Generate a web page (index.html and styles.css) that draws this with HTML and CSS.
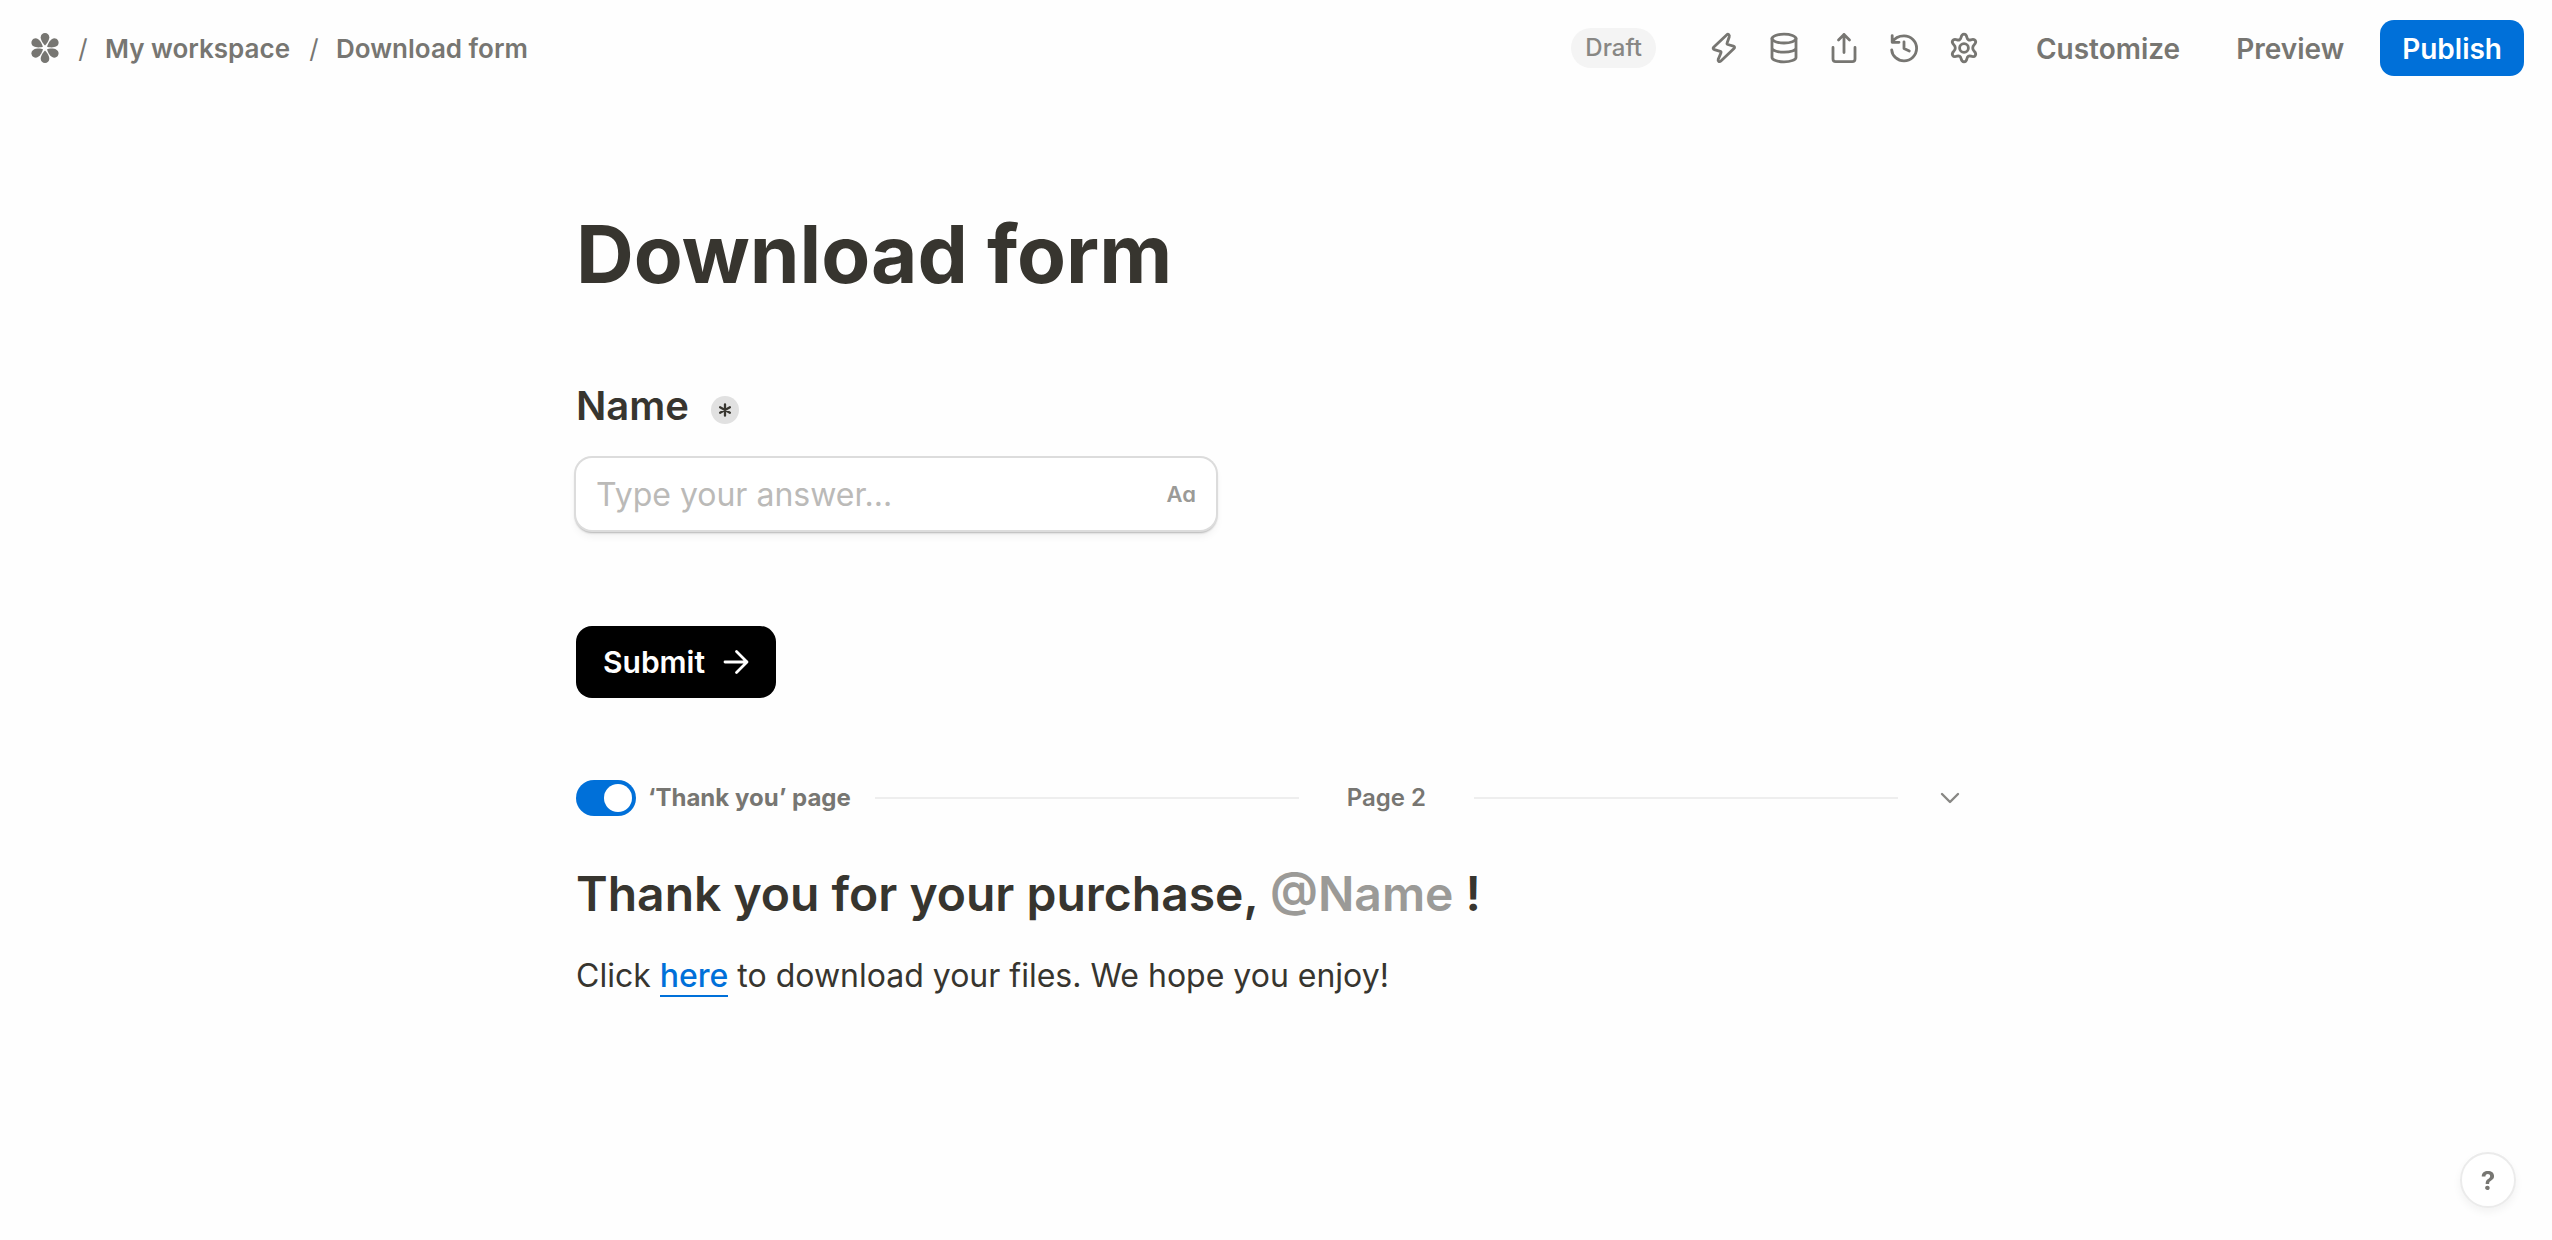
FILE: index.html
```html
<!DOCTYPE html>
<html lang="en">
<head>
    <meta charset="UTF-8">
    <meta name="viewport" content="width=device-width, initial-scale=1.0">
    <title>Download form</title>
    <link rel="stylesheet" href="styles.css">
</head>
<body>
    <!-- Top bar -->
    <header class="topbar">
        <nav class="breadcrumbs">
            <a href="#" class="logo" aria-label="Home">
                <svg width="28" height="32" viewBox="0 0 28 32" fill="currentColor">
                    <path id="petal" d="M14 13.6 C12.8 12.6 9.7 8.6 9.7 5.3 C9.7 2.8 11.6 1 14 1 C16.4 1 18.3 2.8 18.3 5.3 C18.3 8.6 15.2 12.6 14 13.6 Z"/>
                    <use href="#petal" transform="rotate(60 14 16)"/>
                    <use href="#petal" transform="rotate(120 14 16)"/>
                    <use href="#petal" transform="rotate(180 14 16)"/>
                    <use href="#petal" transform="rotate(240 14 16)"/>
                    <use href="#petal" transform="rotate(300 14 16)"/>
                </svg>
            </a>
            <span class="slash">/</span>
            <a href="#">My workspace</a>
            <span class="slash">/</span>
            <a href="#">Download form</a>
        </nav>

        <div class="actions">
            <span class="badge">Draft</span>
            <div class="icons">
                <button class="icon-button" aria-label="Integrations">
                    <svg viewBox="0 0 32 32"><path d="M18.6 3 L5.6 15.2 C4.7 16.2 5.1 17.2 6.4 17.6 L12.2 19.4 C13 19.7 13.2 20.2 12.9 21 L10.2 27.4 C9.6 29.4 11.4 30.4 12.9 29 L26 16.6 C27 15.6 26.7 14.6 25.4 14.2 L19.8 12.5 C19 12.2 18.8 11.7 19.1 11 L21.2 5 C21.9 2.8 20.2 1.5 18.6 3 Z"/></svg>
                </button>
                <button class="icon-button" aria-label="Data">
                    <svg viewBox="0 0 32 32"><ellipse cx="16" cy="6.6" rx="12" ry="4.4"/><path d="M4 6.6 V25.4 C4 27.8 9.4 29.8 16 29.8 C22.6 29.8 28 27.8 28 25.4 V6.6 M4 16 C4 18.4 9.4 20.2 16 20.2 C22.6 20.2 28 18.4 28 16"/></svg>
                </button>
                <button class="icon-button" aria-label="Share">
                    <svg viewBox="0 0 32 32"><path d="M16 20.5 V2.5 M10.5 8 L16 2.5 L21.5 8 M5 15.5 V27 C5 28.7 6 29.7 7.7 29.7 H24.3 C26 29.7 27 28.7 27 27 V15.5"/></svg>
                </button>
                <button class="icon-button" aria-label="History">
                    <svg viewBox="0 0 32 32"><path d="M4.2 3.6 V10.3 H11 M4.2 10.3 C6.5 6.2 11 3.8 16 3.8 C22.9 3.8 28.6 9.4 28.6 16.3 C28.6 23.2 22.9 28.8 16 28.8 C9.5 28.8 4.2 24 3.7 17.8 M16 9.8 V16.4 L21.3 19"/></svg>
                </button>
                <button class="icon-button" aria-label="Settings">
                    <svg viewBox="0 0 32 32"><circle cx="16" cy="16" r="4.4"/><path d="M16 2.2 C18.2 2.2 18.6 3.8 19 5.6 C19.4 7.6 20.9 8.4 22.8 7.8 C24.6 7.2 26.2 6.8 27.3 8.6 C28.5 10.5 27.4 11.7 26 13 C24.3 14.6 24.3 17.4 26 19 C27.4 20.3 28.5 21.5 27.3 23.4 C26.2 25.2 24.6 24.8 22.8 24.2 C20.9 23.6 19.4 24.4 19 26.4 C18.6 28.2 18.2 29.8 16 29.8 C13.8 29.8 13.4 28.2 13 26.4 C12.6 24.4 11.1 23.6 9.2 24.2 C7.4 24.8 5.8 25.2 4.7 23.4 C3.5 21.5 4.6 20.3 6 19 C7.7 17.4 7.7 14.6 6 13 C4.6 11.7 3.5 10.5 4.7 8.6 C5.8 6.8 7.4 7.2 9.2 7.8 C11.1 8.4 12.6 7.6 13 5.6 C13.4 3.8 13.8 2.2 16 2.2 Z"/></svg>
                </button>
            </div>
            <button class="text-button">Customize</button>
            <button class="text-button">Preview</button>
            <button class="publish-button">Publish</button>
        </div>
    </header>

    <!-- Form editor -->
    <main class="editor">
        <h1>Download form</h1>

        <div class="question">
            <label for="name">Name</label>
            <span class="required">
                <svg width="14" height="14" viewBox="0 0 16 16"><path d="M8 1.5 V14.5 M2.4 4.8 L13.6 11.2 M13.6 4.8 L2.4 11.2"/></svg>
            </span>
        </div>
        <div class="field">
            <input type="text" id="name" placeholder="Type your answer...">
            <span class="field-type">Aa</span>
        </div>

        <button class="submit-button">
            Submit
            <svg width="26" height="26" viewBox="0 0 26 26"><path d="M2 13 H24 M13.5 2.5 L24 13 L13.5 23.5"/></svg>
        </button>

        <div class="page-break">
            <input type="checkbox" id="thankYou" class="toggle" checked>
            <label for="thankYou">‘Thank you’ page</label>
            <div class="line"></div>
            <span class="page-number">Page 2</span>
            <div class="line"></div>
            <button class="collapse-button" aria-label="Collapse page">
                <svg width="20" height="12" viewBox="0 0 20 12"><path d="M2 2 L10 10 L18 2"/></svg>
            </button>
        </div>

        <h2>Thank you for your purchase, <span class="mention">@Name</span> !</h2>
        <p>Click <a href="#">here</a> to download your files. We hope you enjoy!</p>
    </main>

    <button class="help-button" aria-label="Help">?</button>
</body>
</html>
```

FILE: styles.css
```css
* {
    box-sizing: border-box;
}
body {
    font-family: Inter, sans-serif;
    background-color: #fefefe;
    margin: 0;
    color: #37352f;
}
button {
    font-family: inherit;
    font-weight: 600;
    border: none;
    padding: 0;
    background: none;
    color: #777672;
    cursor: pointer;
}
svg {
    display: block;
}
svg path, svg circle, svg ellipse {
    stroke-linecap: round;
    stroke-linejoin: round;
}

/* Top bar */
.topbar {
    display: flex;
    justify-content: space-between;
    align-items: center;
    padding: 20px 28px;
    color: #777672;
}
.breadcrumbs {
    display: flex;
    align-items: center;
    font-size: 26px;
    font-weight: 600;
}
.breadcrumbs a {
    color: inherit;
    text-decoration: none;
}
.logo {
    margin-left: 3px;
}
.slash {
    width: 46px;
    padding-left: 2px;
    text-align: center;
    font-weight: 400;
}
.actions {
    display: flex;
    align-items: center;
}
.badge {
    padding: 0 14px;
    border-radius: 20px;
    background: #f4f4f4;
    color: #888784;
    font-size: 24px;
    font-weight: 500;
    line-height: 40px;
}
.icons {
    display: flex;
    gap: 28px;
    margin: 0 56px 0 52px;
}
.icon-button svg {
    width: 32px;
    height: 32px;
    fill: none;
    stroke: #777672;
    stroke-width: 2.8;
}
.text-button {
    margin-right: 56px;
    padding-top: 2px;
    font-size: 28px;
}
.text-button + .publish-button {
    margin-left: -20px;
}
.publish-button {
    height: 56px;
    padding: 2px 22px 0;
    border-radius: 14px;
    background: #0070d9;
    color: #fff;
    font-size: 28px;
}

/* Form editor */
.editor {
    max-width: 1400px;
    margin: 0 auto;
    padding-top: 108px;
}
h1 {
    margin: 0;
    font-size: 80px;
    line-height: 100px;
    font-weight: 700;
}
.question {
    display: flex;
    align-items: center;
    gap: 22px;
    margin-top: 76px;
    font-size: 40px;
    line-height: 52px;
    font-weight: 600;
}
.required {
    display: flex;
    align-items: center;
    justify-content: center;
    width: 28px;
    height: 28px;
    margin-top: 8px;
    border-radius: 50%;
    background: #e1e1e1;
}
.required path {
    stroke: #37352f;
    stroke-width: 2.6;
}
.field {
    display: flex;
    align-items: center;
    width: 640px;
    height: 72px;
    margin-top: 26px;
    padding: 0 20px;
    border-radius: 16px;
    background: #fff;
    box-shadow: 0 0 0 2px #dcdcdc, 0 2px 2px 1px #b4b4b4, 0 6px 8px rgba(0, 0, 0, 0.06);
}
.field input {
    flex: 1;
    min-width: 0;
    padding: 0;
    border: none;
    outline: none;
    background: none;
    color: inherit;
    font-family: inherit;
    font-size: 32px;
}
.field input::placeholder {
    color: #bbbab8;
}
.field-type {
    color: #9b9a97;
    font-size: 22px;
    font-weight: 600;
    font-feature-settings: "cv11"; /* single-storey a */
}
.submit-button {
    display: flex;
    align-items: center;
    gap: 18px;
    height: 72px;
    margin-top: 96px;
    padding: 0 27px;
    border-radius: 16px;
    background: #000;
    color: #fff;
    font-size: 30px;
}
.submit-button svg {
    fill: none;
    stroke: #fff;
    stroke-width: 2.8;
}

/* Page break */
.page-break {
    display: flex;
    align-items: center;
    margin-top: 82px;
    font-size: 24px;
    line-height: 36px;
    font-weight: 600;
    color: #777672;
}
.page-break label {
    margin: 0 24px 0 12px;
    font-weight: 700;
}
.toggle {
    appearance: none;
    width: 60px;
    height: 36px;
    margin: 0;
    padding: 4px;
    border-radius: 18px;
    background: #ccc;
    cursor: pointer;
}
.toggle::before {
    content: "";
    display: block;
    width: 28px;
    height: 28px;
    border-radius: 50%;
    background: #fff;
}
.toggle:checked {
    background: #0070d9;
}
.toggle:checked::before {
    margin-left: auto;
}
.line {
    flex: 1;
    height: 2px;
    background: #eee;
}
.page-number {
    margin: 0 48px;
}
.collapse-button {
    margin: 0 16px 0 42px;
}
.collapse-button svg {
    fill: none;
    stroke: #888784;
    stroke-width: 2.4;
}

h2 {
    margin: 48px 0 0;
    font-size: 48px;
    line-height: 60px;
    font-weight: 600;
}
.mention {
    color: #9b9a97;
}
p {
    margin: 28px 0 0;
    font-size: 32px;
    line-height: 48px;
}
p a {
    color: #0070d9;
    font-weight: 500;
    text-decoration: none;
    border-bottom: 2px solid #0070d9;
}

.help-button {
    position: fixed;
    right: 36px;
    bottom: 32px;
    width: 56px;
    height: 56px;
    border: 2px solid #ebebeb;
    border-radius: 50%;
    background: #fff;
    box-shadow: 0 4px 8px rgba(0, 0, 0, 0.05);
    font-size: 26px;
    font-weight: 700;
}
```
